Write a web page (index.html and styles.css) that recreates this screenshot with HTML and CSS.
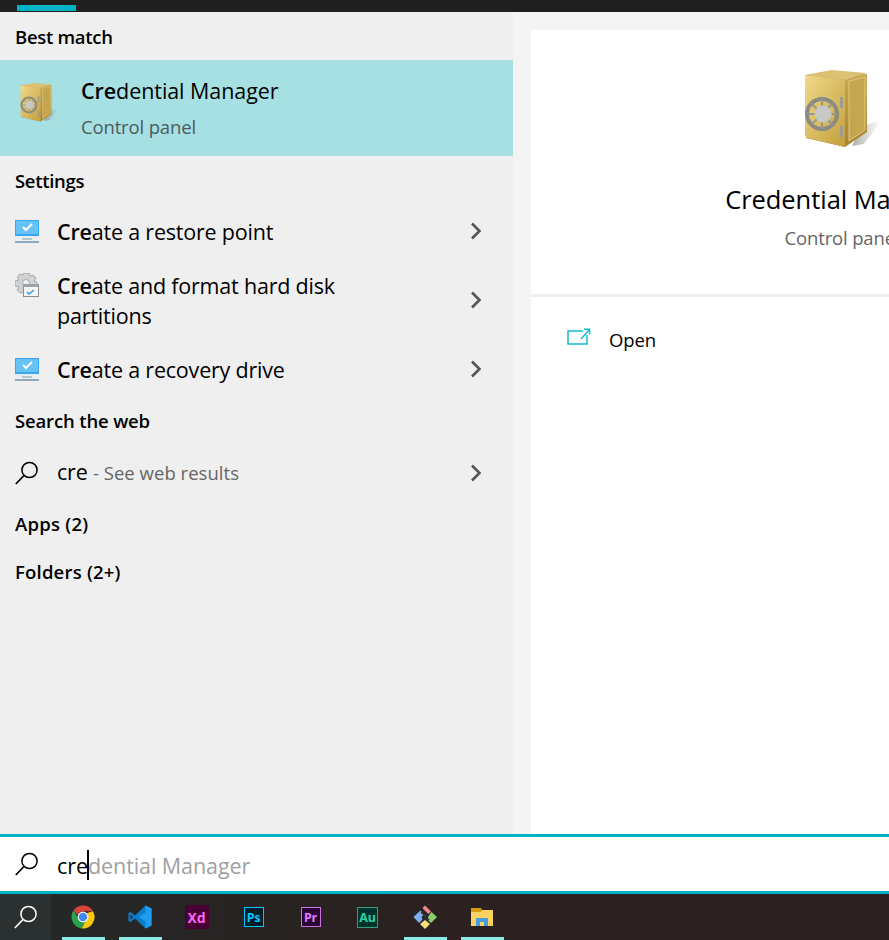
FILE: index.html
```html
<!DOCTYPE html>
<html lang="en">
<head>
 <meta charset="UTF-8">
 <title>Search</title>
 <link rel="stylesheet" href="styles.css">
</head>
<body>
<svg class="defs" width="0" height="0">
 <defs>
  <linearGradient id="safeFront" x1="0" y1="0" x2="1" y2="1"><stop offset="0" stop-color="#efd98a"/><stop offset="1" stop-color="#c4a03c"/></linearGradient>
  <linearGradient id="safeSide" x1="0" y1="0" x2="0" y2="1"><stop offset="0" stop-color="#c9ab5a"/><stop offset="1" stop-color="#a5842e"/></linearGradient>
  <linearGradient id="safeShadow" x1="0" y1="0" x2="1" y2="0"><stop offset="0" stop-color="#8a8a80" stop-opacity=".7"/><stop offset="1" stop-color="#a0a0a0" stop-opacity="0"/></linearGradient>
  <symbol id="safe" viewBox="0 0 80 80">
   <path d="M60 56 L80 50 L62 74 L50 76Z" fill="url(#safeShadow)"/>
   <path d="M4 5 L30 1 L65 4 L65 62 L43 77 L4 68Z" fill="url(#safeSide)"/>
   <path d="M3 5 L43 10 L43 77 L6 68 Q3 67 3 64Z" fill="url(#safeFront)"/>
   <path d="M3 5 L30 0 L64 3 L43 10Z" fill="#dcc074"/>
   <path d="M47 11 L63 7 L63 60 L47 71Z" fill="#c6a550" stroke="#e0c880" stroke-width="1"/>
   <circle cx="20" cy="44" r="15" fill="none" stroke="#8a8a84" stroke-width="4"/>
   <path d="M20 29V59M5 44H35M9 33L31 55M31 33L9 55" stroke="#96968c" stroke-width="2"/>
   <circle cx="21" cy="44" r="8.5" fill="#c8c8c4"/>
   <rect x="38" y="27" width="3" height="11" fill="#9c9c90"/>
   <rect x="38" y="56" width="3" height="11" fill="#9c9c90"/>
  </symbol>
  <symbol id="monitor" viewBox="0 0 24 23">
   <rect x="0" y="0" width="24" height="16" fill="#3fa6ee"/>
   <rect x="1" y="1" width="22" height="13" fill="#66c2f7"/>
   <path d="M8 7l3 3 6-6" fill="none" stroke="#fff" stroke-width="2"/>
   <rect x="0" y="16" width="24" height="2" fill="#e4eef4"/>
   <rect x="7" y="18" width="10" height="2" fill="#b5c5cf"/>
   <rect x="0" y="21" width="24" height="2" fill="#90aabb"/>
  </symbol>
  <symbol id="disk" viewBox="0 0 24 24">
   <path d="M9 0h5l1 3 3-1 3 3-2 3 3 1v4h-8v9H9l-1-3-3 1-3-3 2-3-4-1V8l4-1-2-3 3-3 3 1z" fill="#d2d2d2" stroke="#a8a8a8"/>
   <circle cx="11" cy="10" r="3.5" fill="#efefef" stroke="#a8a8a8"/>
   <rect x="8.500" y="11.500" width="15" height="12" fill="#f5f5f5" stroke="#8c8c8c"/>
   <rect x="8" y="11" width="16" height="3" fill="#9aa4ac"/>
   <path d="M12 19l2 2 5-4" fill="none" stroke="#3b97e8" stroke-width="1.6"/>
  </symbol>
  <symbol id="lens" viewBox="0 0 24 24">
   <circle cx="14.5" cy="9" r="7.6" fill="none" stroke="currentColor" stroke-width="1.5"/>
   <path d="M9 14.5L.8 23" fill="none" stroke="currentColor" stroke-width="1.7"/>
  </symbol>
  <symbol id="chevron" viewBox="0 0 12 18">
   <path d="M2 1.5L9.5 9L2 16.5" fill="none" stroke="currentColor" stroke-width="2.6"/>
  </symbol>
 </defs>
</svg>

<div class="screen">
 <div class="top-bar"><span class="top-tab"></span></div>

 <div class="panes">
  <div class="results">
   <h2 class="group-title first">Best match</h2>
   <div class="best">
    <svg class="best-icon"><use href="#safe"/></svg>
    <div>
     <div class="best-name"><b>Cre</b>dential Manager</div>
     <div class="best-type">Control panel</div>
    </div>
   </div>

   <h2 class="group-title settings">Settings</h2>
   <div class="row h50">
    <svg class="row-icon"><use href="#monitor"/></svg>
    <div class="row-text"><b>Cre</b>ate a restore point</div>
    <svg class="chev"><use href="#chevron"/></svg>
   </div>
   <div class="row h88">
    <svg class="row-icon disk"><use href="#disk"/></svg>
    <div class="row-text"><b>Cre</b>ate and format hard disk<br>partitions</div>
    <svg class="chev"><use href="#chevron"/></svg>
   </div>
   <div class="row h50">
    <svg class="row-icon"><use href="#monitor"/></svg>
    <div class="row-text"><b>Cre</b>ate a recovery drive</div>
    <svg class="chev"><use href="#chevron"/></svg>
   </div>

   <h2 class="group-title web">Search the web</h2>
   <div class="row h50">
    <svg class="row-icon lens"><use href="#lens"/></svg>
    <div class="row-text query">cre <span class="hint">- See web results</span></div>
    <svg class="chev"><use href="#chevron"/></svg>
   </div>

   <h2 class="group-title apps">Apps (2)</h2>
   <h2 class="group-title folders">Folders (2+)</h2>
  </div>

  <div class="detail">
   <div class="detail-card">
    <div class="detail-head">
     <svg class="detail-icon"><use href="#safe"/></svg>
     <div class="detail-name">Credential Manager</div>
     <div class="detail-type">Control panel</div>
    </div>
    <div class="detail-actions">
     <svg class="open-icon" viewBox="0 0 24 18">
      <path d="M16 3H1v13h19V7" fill="none" stroke="#14bccb" stroke-width="1.5"/>
      <path d="M14 11L22 2M17 1.2h5.6v5.4" fill="none" stroke="#14bccb" stroke-width="1.5"/>
     </svg>
     <span>Open</span>
    </div>
   </div>
  </div>
 </div>

 <div class="search-box">
  <svg class="search-icon"><use href="#lens"/></svg>
  <div class="search-text">cre<span class="caret"></span><span class="ghost">dential Manager</span></div>
 </div>

 <div class="taskbar">
  <div class="task-search"><svg class="task-lens"><use href="#lens"/></svg></div>
  <div class="task-item on">
   <svg class="task-svg" viewBox="0 0 24 24">
    <path d="M12 .5A11.500 11.500 0 0 1 22 6.300H12A5.700 5.700 0 0 0 6.600 10L2.700 5.300A11.500 11.500 0 0 1 12 .5Z" fill="#db4437"/>
    <path d="M2.700 5.300L7 12.800A5.700 5.700 0 0 0 11 17.600L7.800 22.700A11.500 11.500 0 0 1 2.700 5.300Z" fill="#2ba24c"/>
    <path d="M22 6.300A11.500 11.500 0 0 1 10.500 23.400L15 15A5.700 5.700 0 0 0 16 8Z" fill="#fbc70f"/>
    <path d="M7.800 22.700L11 17.600 15 15 10.500 23.400Z" fill="#2ba24c"/>
    <circle cx="12" cy="12" r="5.400" fill="#fff"/><circle cx="12" cy="12" r="4.200" fill="#4285f4"/>
   </svg>
  </div>
  <div class="task-item on">
   <svg class="task-svg" viewBox="0 0 24 24">
    <path d="M17.500 .5L23.500 3.500V20.500L17.500 23.500 7 13.500 2.500 17 .5 16V8L2.500 7 7 10.500Z" fill="#0a7cc9"/>
    <path d="M2.500 9.500L5 12 2.500 14.500Z" fill="#2a2120"/>
    <path d="M17.500 .5L23.500 3.500V20.500L17.500 23.500V16.500L11 12 17.500 7.500Z" fill="#1f9cf0"/>
   </svg>
  </div>
  <div class="task-item"><span class="badge xd">Xd</span></div>
  <div class="task-item"><span class="badge ps">Ps</span></div>
  <div class="task-item"><span class="badge pr">Pr</span></div>
  <div class="task-item"><span class="badge au">Au</span></div>
  <div class="task-item on">
   <svg class="task-svg" viewBox="0 0 24 24">
    <path d="M12 .5L18 6.500 15.500 9 13 6.800 10.800 4.500 9.500 3Z" fill="#f08a8a"/>
    <path d="M7.500 5.500L11 9.500 8.500 12 9.500 14.500 6 18 .5 12Z" fill="#7fb0f5"/>
    <path d="M18.500 7L24 12 18 18 14.500 14.500 15.500 11Z" fill="#8ccf6a"/>
    <path d="M12 15L17 19 12 24 7 19Z" fill="#f7dd7c"/>
    <circle cx="12" cy="11" r="1.800" fill="#333"/>
    <path d="M8 7l4 4 4 4M12 11v4" stroke="#333" stroke-width="1.600" fill="none"/>
   </svg>
  </div>
  <div class="task-item on">
   <svg class="task-svg folder" viewBox="0 0 22 18">
    <rect x="0" y="2" width="22" height="16" fill="#fbd25f"/>
    <path d="M0 0h10l1 2-1 2H0z" fill="#d79b10"/>
    <path d="M5 18V10h12v8h-4v-4h-4v4z" fill="#4a9bdf"/>
   </svg>
  </div>
 </div>
</div>
</body>
</html>
```

FILE: styles.css
```css
html, body { margin: 0; padding: 0; }
body { width: 889px; height: 940px; overflow: hidden; font-family: "Open Sans", "Noto Sans", sans-serif; color: #000; }
.defs { position: absolute; }
.screen { display: flex; flex-direction: column; width: 889px; height: 940px; overflow: hidden; }

.top-bar { height: 12px; flex: none; padding: 5px 0 0 17px; box-sizing: border-box; background: #1f1f1f; }
.top-tab { display: block; width: 59px; height: 6px; background: #00b4c6; }

.panes { display: flex; height: 822px; flex: none; }
.results { width: 513px; flex: none; background: #efefef; }
.detail { flex: 1; min-width: 0; overflow: hidden; background: #f4f4f4; padding: 18px 0 0 18px; }

.group-title { margin: 0 0 0 15px; font-size: 18.500px; line-height: 26px; font-weight: 600; letter-spacing: -.3px; }
.group-title.first { padding-top: 12px; height: 36px; }
.group-title.settings { padding-top: 12px; height: 38px; }
.group-title.web { padding-top: 14px; height: 40px; letter-spacing: -.15px; }
.group-title.apps { padding-top: 13px; height: 26px; letter-spacing: .25px; }
.group-title.folders { padding-top: 22px; height: 26px; letter-spacing: .2px; }

.best { display: flex; align-items: flex-start; height: 96px; background: #a7e0e3; }
.best-icon { width: 40px; height: 44px; margin: 21px 0 0 19px; flex: none; }
.best-name { margin: 16px 0 0 22px; font-size: 21.500px; line-height: 30px; letter-spacing: -.07px; }
.best-type { margin: 8px 0 0 22px; font-size: 18.500px; line-height: 26px; letter-spacing: -.15px; color: #4c5a5e; }
b { font-weight: 600; }

.row { display: flex; align-items: center; }
.h50 { height: 50px; }
.h88 { height: 88px; }
.row-icon { width: 24px; height: 23px; margin-left: 15px; flex: none; }
.row-icon.disk { height: 24px; margin-top: -30px; }
.row-icon.lens { height: 24px; color: #000; }
.row-text { margin: 2px 0 0 18px; font-size: 21.500px; line-height: 30px; letter-spacing: -.2px; white-space: nowrap; }
.row-text.query { margin-top: -1px; }
.hint { font-size: 18.500px; letter-spacing: .03px; color: #666; }
.chev { width: 12px; height: 18px; margin-left: auto; margin-right: 31px; color: #555; flex: none; }

.detail-card { width: 622px; height: 804px; background: #fff; }
.detail-head { display: flex; flex-direction: column; align-items: center; height: 264px; border-bottom: 3px solid #f0f0f0; }
.detail-icon { width: 80px; height: 80px; margin-top: 40px; }
.detail-name { margin-top: 31px; font-size: 25.500px; line-height: 36px; letter-spacing: -.05px; white-space: nowrap; }
.detail-type { margin-top: 8px; font-size: 18.500px; line-height: 26px; letter-spacing: -.15px; color: #666; white-space: nowrap; }
.detail-actions { display: flex; align-items: center; padding: 30px 0 0 36px; font-size: 18.500px; line-height: 26px; letter-spacing: -.15px; }
.open-icon { width: 24px; height: 18px; margin: -6px 18px 0 0; }

.search-box { display: flex; align-items: center; height: 60px; flex: none; box-sizing: border-box; background: #fff; border-top: 3px solid #00b4c6; border-bottom: 3px solid #00b4c6; }
.search-icon { width: 24px; height: 24px; margin-left: 15px; color: #000; flex: none; }
.search-text { display: flex; align-items: center; margin: 4px 0 0 18px; font-size: 21.500px; line-height: 30px; letter-spacing: -.07px; }
.caret { width: 2px; height: 30px; margin: -2px -1px 0 -1px; background: #000; }
.ghost { color: #a0a0a0; }

.taskbar { display: flex; flex: 1; background: linear-gradient(90deg, #252828, #2a2120 45%, #2a2120); }
.task-search { display: flex; align-items: center; justify-content: center; width: 51px; margin-right: 3px; background: #2b3130; flex: none; }
.task-lens { width: 24px; height: 24px; color: #fff; }
.task-item { display: flex; align-items: center; justify-content: center; position: relative; box-sizing: border-box; width: 57px; height: 46px; flex: none; }
.task-item.on::after { content: ""; position: absolute; left: 8px; right: 6px; bottom: 0; height: 3px; background: #8be9e9; }
.task-svg { width: 24px; height: 24px; }
.task-svg.folder { width: 22px; height: 18px; }
.badge { display: flex; align-items: center; justify-content: center; box-sizing: border-box; width: 20px; height: 20px; font-family: "Noto Sans", sans-serif; font-size: 12.500px; font-weight: 700; letter-spacing: -.2px; }
.badge.xd { width: 24px; height: 24px; border-radius: 3px; background: #470137; color: #ff61f6; font-size: 14px; }
.badge.ps { background: #001d26; color: #00c8ff; border: 1.500px solid #00c8ff; }
.badge.pr { background: #2a0634; color: #e579ff; border: 1.500px solid #d071e8; }
.badge.au { width: 21px; height: 21px; background: #00312a; color: #2ad4a0; border: 1.500px solid #2aa184; }
```
